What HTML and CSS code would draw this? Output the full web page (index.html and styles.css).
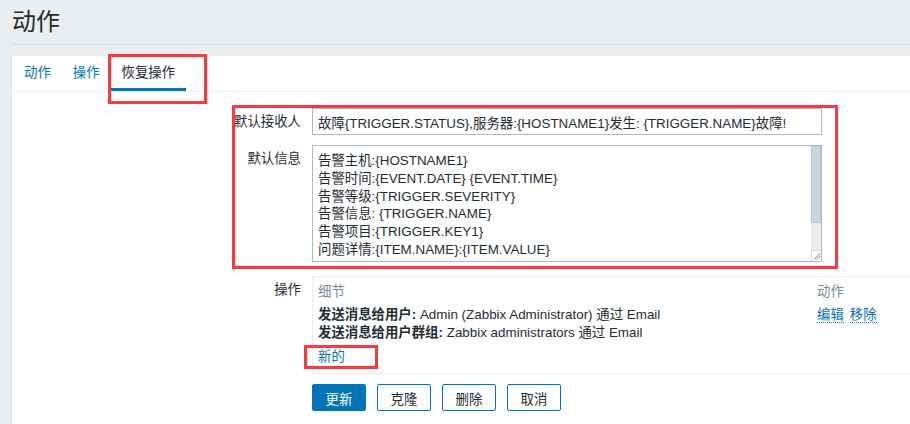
FILE: index.html
```html
<!DOCTYPE html>
<html lang="zh">
<head>
<meta charset="utf-8">
<title>动作</title>
<link rel="stylesheet" href="styles.css">
</head>
<body>
<div class="page">
  <header class="page-header">
    <h1 class="page-title">动作</h1>
  </header>
  <main class="panel">
    <nav class="tabs">
      <a class="tab">动作</a>
      <a class="tab">操作</a>
      <a class="tab tab-active">恢复操作</a>
    </nav>
    <form class="form">
      <div class="form-row row-subject">
        <label class="form-label">默认接收人</label>
        <div class="form-field">
          <input class="input" type="text" readonly value="故障{TRIGGER.STATUS},服务器:{HOSTNAME1}发生: {TRIGGER.NAME}故障!">
        </div>
      </div>
      <div class="form-row row-message">
        <label class="form-label">默认信息</label>
        <div class="form-field">
          <div class="textarea">
            <div class="textarea-text">
              <div>告警主机:{HOSTNAME1}</div>
              <div>告警时间:{EVENT.DATE} {EVENT.TIME}</div>
              <div>告警等级:{TRIGGER.SEVERITY}</div>
              <div>告警信息: {TRIGGER.NAME}</div>
              <div>告警项目:{TRIGGER.KEY1}</div>
              <div>问题详情:{ITEM.NAME}:{ITEM.VALUE}</div>
            </div>
            <div class="scrollbar">
              <div class="scroll-thumb"></div>
              <div class="scroll-track"></div>
              <div class="scroll-grip">
                <svg width="10" height="10" viewBox="0 0 10 10"><path d="M2 9 L9 2 M5 9 L9 5" stroke="#6b6b6b" stroke-width="1" fill="none"/></svg>
              </div>
            </div>
          </div>
        </div>
      </div>
      <div class="form-row row-ops">
        <label class="form-label">操作</label>
        <div class="form-field">
          <div class="ops">
            <div class="ops-grid">
              <div class="ops-head">细节</div>
              <div class="ops-head">动作</div>
              <div class="ops-row ops-first"><b>发送消息给用户:</b> Admin (Zabbix Administrator) 通过 Email</div>
              <div class="ops-row ops-first"><a class="link-dotted">编辑</a><a class="link-dotted link-gap">移除</a></div>
              <div class="ops-row"><b>发送消息给用户群组:</b> Zabbix administrators 通过 Email</div>
              <div class="ops-row"></div>
            </div>
            <a class="link-new">新的</a>
          </div>
        </div>
      </div>
      <div class="form-row row-buttons">
        <div class="form-label"></div>
        <div class="form-field buttons">
          <button type="button" class="btn btn-main">更新</button>
          <button type="button" class="btn btn-alt">克隆</button>
          <button type="button" class="btn btn-alt">删除</button>
          <button type="button" class="btn btn-alt">取消</button>
        </div>
      </div>
    </form>
  </main>
</div>
<div class="mark mark-tab"></div>
<div class="mark mark-form"></div>
<div class="mark mark-new"></div>
</body>
</html>
```
FILE: styles.css
```css
html, body {
  margin: 0;
  padding: 0;
  height: 100%;
  overflow: hidden;
}
body {
  background: #ebeef0;
  color: #1f2c33;
  font-family: "Liberation Sans", "Noto Sans CJK SC", sans-serif;
  font-size: 13.4px;
  position: relative;
}
.page {
  padding-left: 11px;
  height: 100%;
  display: flex;
  flex-direction: column;
}
.page-header {
  height: 44px;
  border-bottom: 1px solid #dcdfe2;
  margin-bottom: 11px;
}
.page-title {
  margin: 0;
  padding-left: 1px;
  font-size: 24px;
  font-weight: normal;
  line-height: 44px;
  color: #1f2c33;
}
.panel {
  flex: 1;
  background: #fff;
  border-left: 1px solid #dfe4e7;
}
.tabs {
  display: flex;
  height: 35px;
  border-bottom: 1px solid #ebeef0;
  padding-left: 1px;
}
.tab {
  padding: 0 11px;
  line-height: 34px;
  color: #0275b8;
  cursor: pointer;
}
.tab-active {
  color: #1f2c33;
  box-shadow: inset 0 -3px 0 #0275b8;
}
.form {
  padding-top: 16px;
}
.form-row {
  display: grid;
  grid-template-columns: 289px 1fr;
  column-gap: 11px;
}
.row-message { margin-top: 10px; }
.row-ops { margin-top: 14px; }
.row-buttons { margin-top: 10px; }
.form-label {
  text-align: right;
  line-height: 27px;
  white-space: nowrap;
}
.input {
  display: block;
  box-sizing: border-box;
  width: 510px;
  height: 27px;
  margin: 0;
  padding: 0 5px;
  border: 1px solid #acbbc2;
  border-radius: 0;
  font: inherit;
  color: #1f2c33;
  background: #fff;
  outline: none;
}
.textarea {
  box-sizing: border-box;
  width: 510px;
  height: 117px;
  border: 1px solid #acbbc2;
  display: flex;
  overflow: hidden;
}
.textarea-text {
  flex: 1;
  padding: 6px 5px 0;
  line-height: 17.8px;
  white-space: nowrap;
  overflow: hidden;
}
.scrollbar {
  width: 10px;
  display: flex;
  flex-direction: column;
}
.scroll-thumb {
  height: 77px;
  background: #c9d4db;
  border: 1px solid #bcc8d0;
  box-sizing: border-box;
}
.scroll-track {
  flex: 1;
  background: #ebebeb;
}
.scroll-grip {
  height: 11px;
  background: #fff;
  border-top: 1px solid #d6d6d6;
  border-left: 1px solid #d6d6d6;
  box-sizing: border-box;
  display: flex;
}
.scroll-grip svg { display: block; }
.ops {
  border: 1px solid #ebeef0;
  border-right: none;
  padding: 6px 0 7px 5px;
}
.ops-grid {
  display: grid;
  grid-template-columns: 499px 1fr;
  line-height: 18px;
}
.ops-head {
  color: #768d99;
  margin-bottom: 5px;
}
.ops-row b { font-weight: bold; }
.link-dotted {
  color: #0275b8;
  border-bottom: 1px dotted #0275b8;
  cursor: pointer;
}
.link-gap { margin-left: 6px; }
.link-new {
  display: block;
  margin-top: 6px;
  line-height: 18px;
  color: #0275b8;
  cursor: pointer;
}
.buttons {
  display: flex;
  gap: 11px;
}
.btn {
  box-sizing: border-box;
  width: 54px;
  height: 27px;
  padding: 0;
  border: 1px solid #0275b8;
  border-radius: 2px;
  font: inherit;
  cursor: pointer;
}
.btn-main {
  background: #0275b8;
  color: #fff;
}
.btn-alt {
  background: #fff;
  color: #1f2c33;
}
.mark {
  position: absolute;
  border: 3px solid #fa3a3a;
  box-sizing: border-box;
  pointer-events: none;
}
.mark-tab { left: 108px; top: 54px; width: 99px; height: 50px; }
.mark-form { left: 232px; top: 105px; width: 606px; height: 164px; }
.mark-new { left: 304px; top: 345px; width: 74px; height: 24px; }
```
